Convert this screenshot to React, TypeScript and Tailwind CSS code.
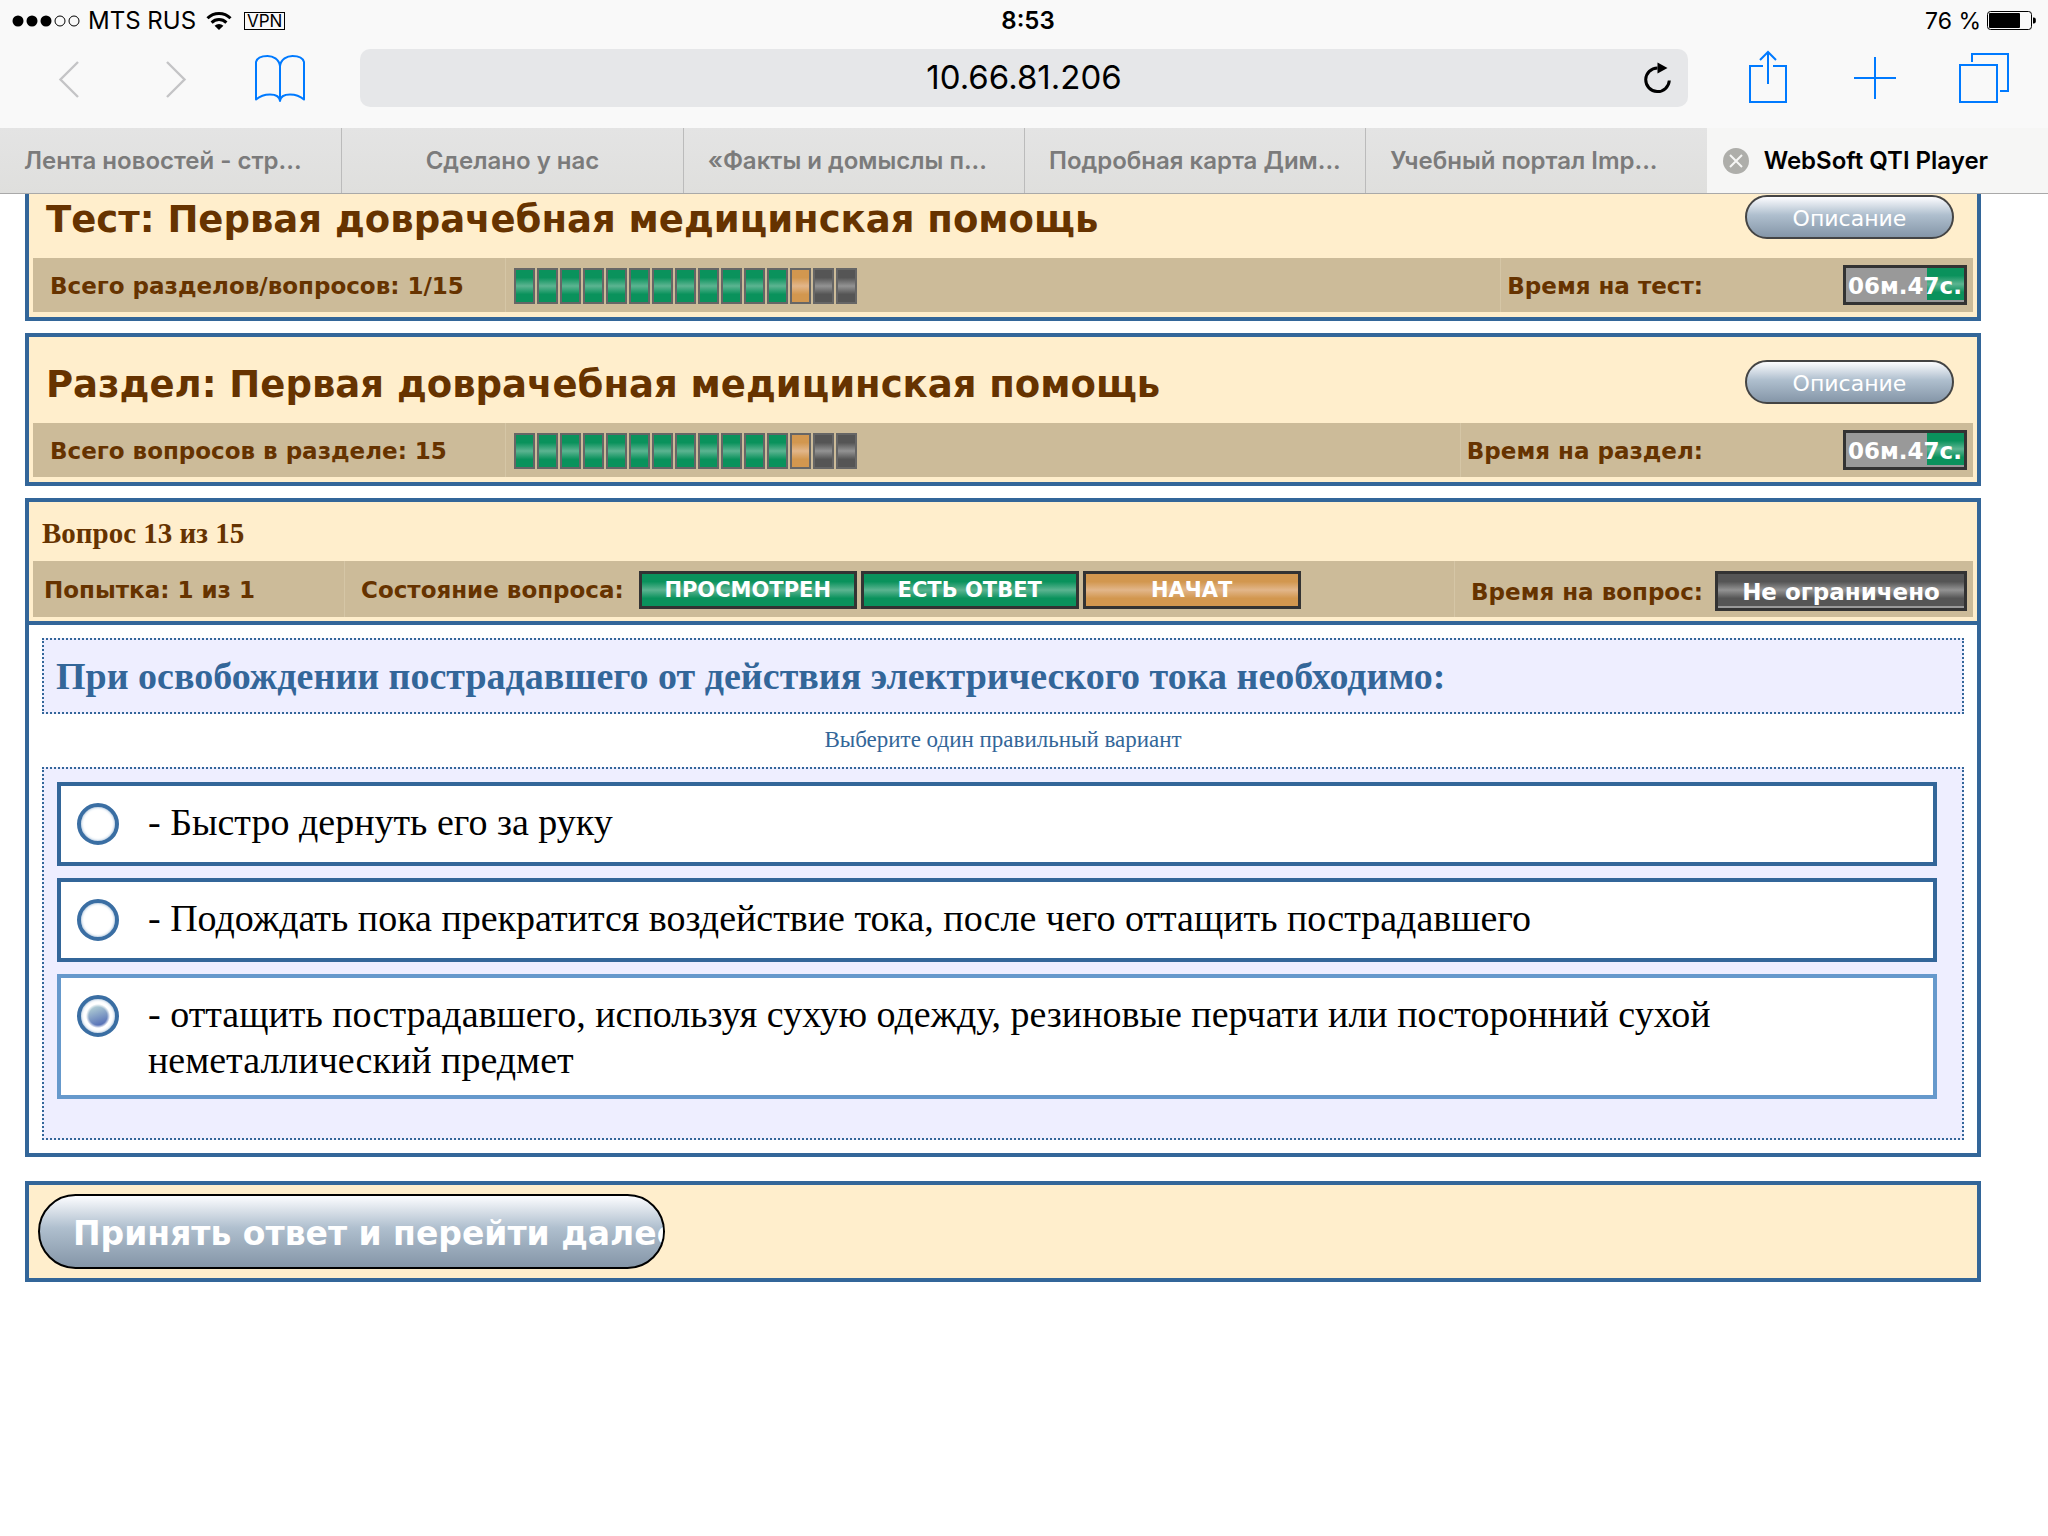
import { useState } from "react";
import type { ReactNode } from "react";

type CellState = "done" | "current" | "idle";

const CELL_FILL: Record<CellState, string> = {
  done: "bg-[linear-gradient(#0a925c_0%,#0a925c_24%,#5cb491_50%,#0a925c_76%,#0a925c_100%)]",
  current: "bg-[linear-gradient(#d2974f_0%,#d2974f_24%,#e2b68a_50%,#d2974f_76%,#d2974f_100%)]",
  idle: "bg-[linear-gradient(#555555_0%,#555555_24%,#939393_50%,#555555_76%,#555555_100%)]",
};

const CELLS: CellState[] = [
  ...Array.from({ length: 12 }, (): CellState => "done"),
  "current",
  "idle",
  "idle",
];

const TABS = [
  "Лента новостей - стр...",
  "Сделано у нас",
  "«Факты и домыслы п...",
  "Подробная карта Дим...",
  "Учебный портал Imp...",
];

const OPTIONS = [
  "- Быстро дернуть его за руку",
  "- Подождать пока прекратится воздействие тока, после чего оттащить пострадавшего",
  "- оттащить пострадавшего, используя сухую одежду, резиновые перчати или посторонний сухой неметаллический предмет",
];

function StatusBar() {
  return (
    <div className="grid h-10 grid-cols-3 items-center px-3 pt-0.5 text-2xl">
      <div className="flex items-center">
        <svg width="70" height="14" viewBox="0 0 70 14" aria-hidden="true">
          <circle cx="6" cy="7" r="5.5" />
          <circle cx="20" cy="7" r="5.5" />
          <circle cx="34" cy="7" r="5.5" />
          <circle cx="48" cy="7" r="5" fill="none" stroke="#000" />
          <circle cx="62" cy="7" r="5" fill="none" stroke="#000" />
        </svg>
        <span className="ml-1.5">MTS RUS</span>
        <svg className="ml-2.5" width="26" height="20" viewBox="0 0 26 20" aria-hidden="true">
          <path d="M1.5 7.2A16.3 16.3 0 0 1 24.5 7.2" fill="none" stroke="#000" strokeWidth="3" />
          <path d="M5.6 11.6A10.5 10.5 0 0 1 20.4 11.6" fill="none" stroke="#000" strokeWidth="3" />
          <path d="M13 19L8.6 14.8A6.2 6.2 0 0 1 17.4 14.8Z" />
        </svg>
        <span className="ml-3 flex h-[18px] items-center border border-black px-0.5 text-[17px] leading-none">VPN</span>
      </div>
      <div className="pl-2 text-center font-semibold">8:53</div>
      <div className="flex items-center justify-end gap-1.5">
        <span className="text-[23px]">76 %</span>
        <svg width="49" height="20" viewBox="0 0 49 20" aria-hidden="true">
          <rect x="0.5" y="0.5" width="44" height="18" rx="3" fill="none" stroke="#000" />
          <rect x="2" y="2" width="31" height="15" rx="1" />
          <path d="M46 6.5h0.8a2 2 0 0 1 2 2v2a2 2 0 0 1-2 2H46z" />
        </svg>
      </div>
    </div>
  );
}

function Toolbar() {
  return (
    <div className="grid h-[88px] grid-cols-[360px_1fr_360px] items-center pb-3 text-[#007aff]">
      <div className="flex items-center pl-[58px]">
        <button type="button" aria-label="Назад" className="text-[#c4c4c6]">
          <svg width="22" height="40" viewBox="0 0 22 40" fill="none" stroke="currentColor" strokeWidth="2.4">
            <path d="M20 4L2.500 21.500L20 39" />
          </svg>
        </button>
        <button type="button" aria-label="Вперёд" className="ml-[85px] text-[#c4c4c6]">
          <svg width="22" height="40" viewBox="0 0 22 40" fill="none" stroke="currentColor" strokeWidth="2.4">
            <path d="M2 4L19.500 21.500L2 39" />
          </svg>
        </button>
        <button type="button" aria-label="Закладки" className="ml-[67px]">
          <svg width="52" height="50" viewBox="0 0 52 50" fill="none" stroke="currentColor" strokeWidth="2">
            <path
              d="M26 48V13C25 6 19 3 13.500 3C8 3 3 5 2 9V46.500C6 43 11 41.500 16 41.500C21 41.500 25.500 43 26 48C26.500 43 31 41.500 36 41.500C41 41.500 46 43 50 46.500V9C49 5 44 3 38.500 3C33 3 27 6 26 13"
              strokeLinejoin="round"
            />
          </svg>
        </button>
      </div>
      <div className="flex h-[58px] items-center rounded-[10px] bg-[#e6e7e9] pr-4 text-black">
        <input
          type="text"
          aria-label="Адрес"
          defaultValue="10.66.81.206"
          className="min-w-0 flex-1 bg-transparent pl-[44px] text-center text-[33px] outline-none"
        />
        <button type="button" aria-label="Обновить">
          <svg width="28" height="32" viewBox="0 0 28 32">
            <path d="M25.300 18.500A11.800 11.800 0 1 1 13.500 6" fill="none" stroke="#000" strokeWidth="3" />
            <path d="M13.500 0.500V11.500L23.500 6Z" />
          </svg>
        </button>
      </div>
      <div className="flex items-center justify-between pr-[39px] pl-[60px]">
        <button type="button" aria-label="Поделиться">
          <svg width="40" height="56" viewBox="0 0 40 56" fill="none" stroke="currentColor" strokeWidth="2">
            <path d="M15 16H2V52H38V16H25" />
            <path d="M20 34V2M12 10L20 2L28 10" />
          </svg>
        </button>
        <button type="button" aria-label="Новая вкладка">
          <svg width="44" height="44" viewBox="0 0 44 44" fill="none" stroke="currentColor" strokeWidth="2">
            <path d="M23 1V43M2 22H44" />
          </svg>
        </button>
        <button type="button" aria-label="Все вкладки">
          <svg width="50" height="50" viewBox="0 0 50 50" fill="none" stroke="currentColor" strokeWidth="2">
            <rect x="1" y="12" width="37" height="37" />
            <path d="M13 9V1H49V38H41" />
          </svg>
        </button>
      </div>
    </div>
  );
}

function TabBar() {
  return (
    <nav className="grid h-[66px] grid-cols-6 border-b border-[#a9a9a9] text-2xl font-semibold">
      {TABS.map((tab) => (
        <a
          key={tab}
          href="#"
          className="flex items-center justify-center border-l border-[#bbbbbb] bg-linear-to-b from-[#e4e4e4] to-[#dfdfdd] px-6 text-[#7b7b7b] first:border-l-0"
        >
          <span className="whitespace-nowrap">{tab}</span>
          {tab.endsWith("...") && <span className="flex-1" />}
        </a>
      ))}
      <a href="#" className="flex items-center gap-[15px] bg-[#f6f6f5] pl-4 text-black">
        <svg width="26" height="26" viewBox="0 0 26 26" aria-hidden="true">
          <circle cx="13" cy="13" r="13" fill="#aeaeaa" />
          <path d="M7 7L19 19M19 7L7 19" stroke="#f6f6f5" strokeWidth="2" />
        </svg>
        <span className="whitespace-nowrap">WebSoft QTI Player</span>
      </a>
    </nav>
  );
}

function ProgressCells() {
  return (
    <div className="flex gap-0.5" role="img" aria-label="13 / 15">
      {CELLS.map((state, i) => (
        <span key={i} className={`h-9 w-[21px] border-2 border-[#666666] ${CELL_FILL[state]}`} />
      ))}
    </div>
  );
}

function Timer() {
  return (
    <div className="flex h-10 w-[124px] items-center justify-center border-[3px] border-[#333333] bg-[#999999] bg-[linear-gradient(#0a925c_0%,#0a925c_24%,#5cb491_50%,#0a925c_76%,#0a925c_100%)] bg-size-[37px_32px] bg-right-top bg-no-repeat pt-0.5 text-[23px]">
      <span className="whitespace-nowrap text-white">06м.47с.</span>
    </div>
  );
}

function Summary(props: { title: string; total: string; timeLabel: string; className?: string }) {
  return (
    <section className={`border-4 border-[#336699] bg-[#ffeecc] px-1 pb-[5px] font-bold ${props.className ?? ""}`}>
      <div className="flex h-[86px] items-center justify-between pt-1 pr-[19px] pl-[13px]">
        <h1 className="pt-1 text-[37px] leading-none">{props.title}</h1>
        <button
          type="button"
          className="h-11 w-[209px] rounded-full border-2 border-[#444444] bg-linear-to-b from-[#fdfdff] via-[#afbfce] via-45% to-[#8596a8] pt-0.5 text-[22px] font-normal text-white"
        >
          Описание
        </button>
      </div>
      <div className="flex h-[54px] bg-[#ccbb99] text-[23px]">
        <div className="flex w-[472px] items-center pt-0.5 pl-[17px]">{props.total}</div>
        <div className="flex flex-1 items-center border-l border-[#d5c6a6] pt-0.5 pl-2">
          <ProgressCells />
        </div>
        <div className="flex items-center border-l border-[#d5c6a6] pr-1.5 pl-1.5">
          <span className="pt-0.5">{props.timeLabel}</span>
          <div className="ml-3 flex w-[252px] justify-end">
            <Timer />
          </div>
        </div>
      </div>
    </section>
  );
}

function Chip({ state, children }: { state: CellState; children: ReactNode }) {
  return (
    <span
      className={`flex h-[38px] w-[218px] items-center justify-center border-[3px] border-[#333333] pt-0.5 text-[21px] text-white ${CELL_FILL[state]}`}
    >
      {children}
    </span>
  );
}

function Option(props: { text: string; checked: boolean; onSelect: () => void }) {
  return (
    <label
      className={`flex min-h-[84px] items-start gap-[29px] border-4 bg-white pt-[13px] pr-8 pb-3 pl-4 ${
        props.checked ? "border-[#6699cc]" : "border-[#336699]"
      }`}
    >
      <input
        type="radio"
        name="answer"
        checked={props.checked}
        onChange={props.onSelect}
        className="mt-1 size-[42px] shrink-0 appearance-none rounded-full border-4 border-[#3a6ea3] shadow-[inset_0_0_3px_#7fa3c8] checked:bg-[radial-gradient(circle,transparent_9px,#ffffff_12px),linear-gradient(160deg,#a9c6d2_30%,#5a74b8_70%)]"
      />
      <span>{props.text}</span>
    </label>
  );
}

function Question() {
  const [selected, setSelected] = useState(2);
  return (
    <section className="mt-3 border-4 border-[#336699] font-['Liberation_Serif',serif]">
      <div className="border-b-4 border-[#336699] bg-[#ffeecc] px-1 pb-1 font-bold">
        <h2 className="flex h-[59px] items-center pt-1 pl-[9px] text-[29px]">Вопрос 13 из 15</h2>
        <div className="flex h-14 bg-[#ccbb99] font-['DejaVu_Sans',sans-serif] text-[23px]">
          <div className="flex w-[311px] items-center pt-0.5 pl-[11px]">Попытка: 1 из 1</div>
          <div className="flex flex-1 items-center border-l border-[#d5c6a6] pt-0.5 pl-4">
            <span>Состояние вопроса:</span>
            <div className="ml-[15px] flex gap-1">
              <Chip state="done">ПРОСМОТРЕН</Chip>
              <Chip state="done">ЕСТЬ ОТВЕТ</Chip>
              <Chip state="current">НАЧАТ</Chip>
            </div>
          </div>
          <div className="flex items-center border-l border-[#d5c6a6] pt-1 pr-1.5 pl-4">
            <span className="pt-0.5">Время на вопрос:</span>
            <div className="ml-3 flex h-10 w-[252px] items-center justify-center border-[3px] border-[#333333] bg-[#999999] bg-[linear-gradient(#555555_0%,#555555_24%,#939393_50%,#555555_76%,#555555_100%)] bg-size-[100%_32px] bg-no-repeat pt-0.5 text-white">
              Не ограничено
            </div>
          </div>
        </div>
      </div>
      <div className="p-[13px] text-[#336699]">
        <p className="flex h-[76px] items-center border-2 border-dotted border-[#336699] bg-[#eeeeff] px-3 text-[38px] font-bold">
          При освобождении пострадавшего от действия электрического тока необходимо:
        </p>
        <p className="flex h-[53px] items-center justify-center text-[23px]">Выберите один правильный вариант</p>
        <div
          role="radiogroup"
          className="flex flex-col gap-3 border-2 border-dotted border-[#336699] bg-[#eeeeff] px-[13px] pt-[13px] pr-[25px] pb-[39px] text-[38px] leading-[46px] text-black"
        >
          {OPTIONS.map((text, i) => (
            <Option key={text} text={text} checked={selected === i} onSelect={() => setSelected(i)} />
          ))}
        </div>
      </div>
    </section>
  );
}

export default function App() {
  return (
    <div className="min-h-screen overflow-hidden bg-white font-['Inter',sans-serif] text-black">
      <header className="relative z-10 bg-[#f9f9f9]">
        <StatusBar />
        <Toolbar />
        <TabBar />
      </header>
      <main className="-mt-[26px] pr-[67px] pl-[25px] font-['DejaVu_Sans',sans-serif] text-[#663300]">
        <Summary
          title="Тест: Первая доврачебная медицинская помощь"
          total="Всего разделов/вопросов: 1/15"
          timeLabel="Время на тест:"
        />
        <Summary
          className="mt-3"
          title="Раздел: Первая доврачебная медицинская помощь"
          total="Всего вопросов в разделе: 15"
          timeLabel="Время на раздел:"
        />
        <Question />
        <footer className="mt-6 border-4 border-[#336699] bg-[#ffeecc] p-[9px]">
          <button
            type="button"
            className="flex h-[75px] w-[627px] items-center overflow-hidden rounded-full border-2 border-black bg-linear-to-b from-[#fdfdff] via-[#afbfce] via-45% to-[#8596a8] pt-1 pl-[33px] text-[33px] font-bold whitespace-nowrap text-white"
          >
            Принять ответ и перейти далее
          </button>
        </footer>
      </main>
    </div>
  );
}
